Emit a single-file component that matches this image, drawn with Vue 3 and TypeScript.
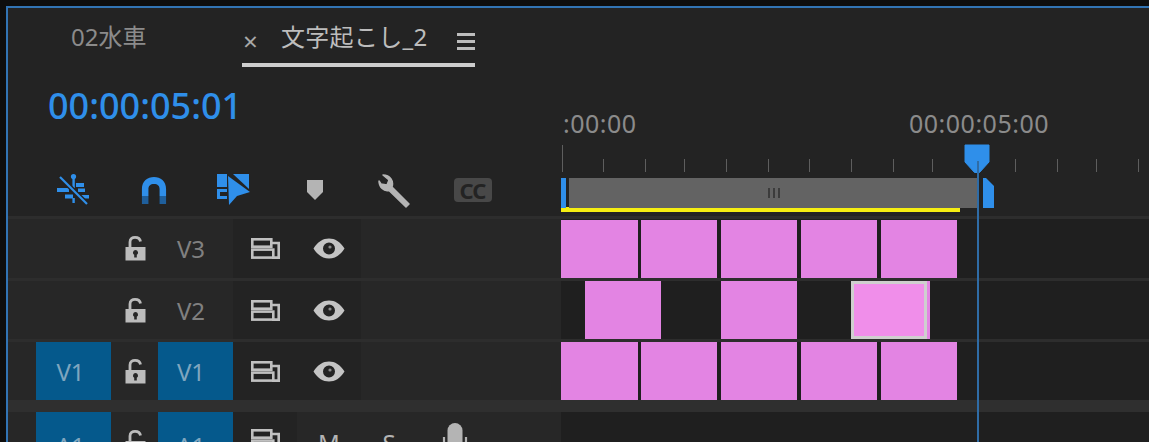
<script setup lang="ts">
interface Clip {
  start: number;
  end: number;
  selected?: boolean;
}

interface Track {
  name: string;
  patched: boolean;
  clips: Clip[];
}

// タイムライン上のクリップ位置(レーン左端からのpx)
const fullRow: Clip[] = [
  { start: 0, end: 77 },
  { start: 80, end: 156 },
  { start: 160, end: 236 },
  { start: 240, end: 316 },
  { start: 320, end: 396 }
];

const tracks: Track[] = [
  { name: "V3", patched: false, clips: fullRow },
  {
    name: "V2",
    patched: false,
    clips: [
      { start: 24, end: 100 },
      { start: 160, end: 236 },
      { start: 290, end: 366, selected: true },
      { start: 366, end: 369 }
    ]
  },
  { name: "V1", patched: true, clips: fullRow }
];

const ticks = [562, 603, 645, 684, 726, 768, 809, 851, 893, 932, 1015, 1057, 1096, 1138];

const clipStyle = (clips: Clip[], i: number) => ({
  width: `${clips[i].end - clips[i].start}px`,
  marginLeft: `${clips[i].start - (i > 0 ? clips[i - 1].end : 0)}px`
});
</script>

<template>
  <div class="panel">
    <div class="head">
      <div class="head-left">
        <div class="tabs">
          <div class="tab">02水車</div>
          <div class="tab tab-active">
            <span class="close">×</span>
            <span class="tab-name">文字起こし_2</span>
            <span class="burger"><i></i><i></i><i></i></span>
          </div>
        </div>
        <div class="timecode">00:00:05:01</div>
        <div class="tools">
          <svg width="34" height="34" viewBox="0 0 34 34">
            <g fill="#2f8fea">
              <circle cx="16.5" cy="3.5" r="2.6" />
              <rect x="15.4" y="3" width="2.4" height="12" />
              <rect x="19" y="10" width="8" height="4" />
              <rect x="0" y="15" width="12" height="4" />
              <rect x="21" y="15.5" width="7" height="3.5" />
              <rect x="8" y="21.5" width="8" height="4" />
              <rect x="24" y="22" width="8" height="3.5" />
              <rect x="15.4" y="25" width="2.4" height="5" />
            </g>
            <path d="M2 3 L30 31" stroke="#232323" stroke-width="5" />
            <path d="M3 4 L30 31" stroke="#2f8fea" stroke-width="2.2" />
          </svg>
          <svg width="26" height="30" viewBox="0 0 28 30" preserveAspectRatio="none">
            <path d="M1 21 V14 C1 6 7 2 14 2 C21 2 27 6 27 14 V21 H20 V14 C20 11 18 9 14 9 C10 9 8 11 8 14 V21 Z" fill="#2f8fea" />
            <path d="M1 21 H8 V29 H1 Z M20 21 H27 V29 H20 Z" fill="#1f5f9c" />
          </svg>
          <svg width="36" height="34" viewBox="0 0 36 34">
            <g fill="#2f8fea">
              <rect x="1" y="1" width="10" height="13" />
              <path d="M1 16 H11 V19 H4 V23 H11 V26 H1 Z" />
              <path d="M17 1 H33 V16 Z" />
              <path d="M12 3 L34 19 L21 23 L13 32 Z" />
            </g>
          </svg>
          <svg class="marker" width="18" height="22" viewBox="0 0 18 22">
            <path d="M1 1 H17 V13 L9 21 L1 13 Z" fill="#b4b4b4" />
          </svg>
          <svg class="wrench" width="34" height="36" viewBox="0 0 34 36">
            <path d="M31 32 L14 15 C16 9 12 3 5 3 L11 8 L9 13 L3 12 L1 9 C1 15 6 20 11 18.5 L28 35 Z" fill="#b4b4b4" stroke="#b4b4b4" stroke-linejoin="round" stroke-width="1.5" />
          </svg>
          <div class="cc">CC</div>
        </div>
      </div>
      <div class="head-right">
        <div class="ruler">
          <span class="ruler-label first">:00:00</span>
          <span class="ruler-label second">00:00:05:00</span>
          <i v-for="(x, i) in ticks" :key="x" class="tick" :class="{ major: i === 0 }" :style="{ left: `${x - 561}px` }"></i>
        </div>
        <div class="zoombar">
          <div class="handle-left"></div>
          <div class="zoom-thumb"><span class="grip"><i></i><i></i><i></i></span></div>
          <div class="handle-right"></div>
        </div>
        <div class="work-area"></div>
      </div>
    </div>

    <template v-for="t in tracks" :key="t.name">
      <div class="sep"></div>
      <div class="track">
        <div class="track-head">
          <div class="patch" :class="{ on: t.patched }">{{ t.patched ? "V1" : "" }}</div>
          <div class="cell lock">
            <svg width="21" height="25" viewBox="0 0 21 25">
              <path d="M5 12 V6 C5 2.5 7.5 1.4 10 1.4 C13 1.4 15 2.5 15.5 5.5" fill="none" stroke="#bcbcbc" stroke-width="2.8" />
              <path fill-rule="evenodd" d="M0.5 11 H20.5 V24.5 H0.5 Z M10.5 14 A2.6 2.6 0 0 0 9.2 18.8 V21.5 H11.8 V18.8 A2.6 2.6 0 0 0 10.5 14 Z" fill="#bcbcbc" />
            </svg>
          </div>
          <div class="target" :class="{ on: t.patched }">{{ t.name }}</div>
          <div class="cell dark">
            <svg width="29" height="21" viewBox="0 0 29 21">
              <g fill="none" stroke="#c0c0c0" stroke-width="2.6">
                <rect x="1.3" y="1.3" width="19" height="7.4" />
                <rect x="1.3" y="11.6" width="21" height="8" />
                <path d="M20 5 H27.7 V19.6 H21" />
              </g>
            </svg>
          </div>
          <div class="cell dark">
            <svg width="32" height="21" viewBox="0 0 32 21">
              <path fill-rule="evenodd" d="M0.5 10.5 C5 3.5 10 0.5 16 0.5 C22 0.5 27 3.5 31.5 10.5 C27 17.5 22 20.5 16 20.5 C10 20.5 5 17.5 0.5 10.5 Z M16 4.5 A6 6 0 1 0 16 16.5 A6 6 0 1 0 16 4.5 Z" fill="#c4c4c4" />
              <circle cx="17" cy="9" r="1.6" fill="#8a8a8a" />
            </svg>
          </div>
        </div>
        <div class="lane">
          <div
            v-for="(c, i) in t.clips"
            :key="c.start"
            class="clip"
            :class="{ selected: c.selected }"
            :style="clipStyle(t.clips, i)"
          ></div>
        </div>
      </div>
    </template>

    <div class="gutter"></div>

    <div class="track audio">
      <div class="track-head">
        <div class="patch on">A1</div>
        <div class="cell lock">
          <svg width="21" height="25" viewBox="0 0 21 25">
            <path d="M5 12 V6 C5 2.5 7.5 1.4 10 1.4 C13 1.4 15 2.5 15.5 5.5" fill="none" stroke="#bcbcbc" stroke-width="2.8" />
            <path fill-rule="evenodd" d="M0.5 11 H20.5 V24.5 H0.5 Z M10.5 14 A2.6 2.6 0 0 0 9.2 18.8 V21.5 H11.8 V18.8 A2.6 2.6 0 0 0 10.5 14 Z" fill="#bcbcbc" />
          </svg>
        </div>
        <div class="target on">A1</div>
        <div class="cell dark">
          <svg width="29" height="21" viewBox="0 0 29 21">
            <g fill="none" stroke="#c0c0c0" stroke-width="2.6">
              <rect x="1.3" y="1.3" width="19" height="7.4" />
              <rect x="1.3" y="11.6" width="21" height="8" />
              <path d="M20 5 H27.7 V19.6 H21" />
            </g>
          </svg>
        </div>
        <div class="cell letter">M</div>
        <div class="cell letter">S</div>
        <div class="cell mic">
          <svg width="26" height="30" viewBox="0 0 26 30">
            <rect x="5.5" y="0" width="15" height="26" rx="7.5" fill="#b4b4b4" />
            <path d="M2 14 V18 C2 24 7 28 13 28 C19 28 24 24 24 18 V14" fill="none" stroke="#b4b4b4" stroke-width="2.2" />
          </svg>
        </div>
      </div>
      <div class="lane"></div>
    </div>

    <div class="playhead">
      <svg width="26" height="30" viewBox="0 0 26 30">
        <path d="M1 1 H25 V18 L15.5 28.5 H10.5 L1 18 Z" fill="#2f8fea" stroke="#2f8fea" stroke-linejoin="round" />
      </svg>
      <i class="playhead-line"></i>
    </div>
  </div>
</template>

<style>
html,
body {
  margin: 0;
  background: #0e0e0e;
  overflow: hidden;
}
</style>

<style scoped>
.panel {
  position: relative;
  box-sizing: border-box;
  width: 1143px;
  height: 436px;
  margin: 6px 0 0 6px;
  border-top: 2px solid #3274b4;
  border-left: 2px solid #3274b4;
  background: #232323;
  overflow: hidden;
  font-family: "Noto Sans", "Noto Sans CJK JP", sans-serif;
}

.head {
  display: flex;
  height: 208px;
}

.head-left {
  width: 553px;
  flex: none;
}

.tabs {
  display: flex;
  height: 59px;
  padding-left: 63px;
  font-size: 24px;
  line-height: 58px;
  color: #8b8b8b;
}

.tab {
  width: 171px;
  height: 59px;
}

.tab-active {
  box-sizing: border-box;
  display: flex;
  align-items: center;
  width: 233px;
  height: 59px;
  border-bottom: 4px solid #cdcdcd;
  color: #bdbdbd;
}

.close {
  box-sizing: border-box;
  position: relative;
  top: 5px;
  width: 39px;
  padding-left: 1px;
  font-size: 26px;
  color: #a8a8a8;
}

.tab-name {
  position: relative;
  top: 1px;
  width: 176px;
  letter-spacing: 0.3px;
  white-space: nowrap;
}

.burger {
  display: flex;
  flex-direction: column;
  gap: 4px;
  width: 18px;
  margin-top: 11px;
}

.burger i {
  display: block;
  height: 3px;
  background: #bdbdbd;
}

.timecode {
  margin: 19px 0 0 40px;
  font-size: 36px;
  line-height: 40px;
  font-weight: 500;
  color: #2f8fea;
  white-space: nowrap;
}

.tools {
  display: grid;
  grid-template-columns: repeat(6, 80px);
  justify-items: center;
  align-items: center;
  height: 38px;
  margin: 45px 0 0 26px;
}

.marker {
  margin-left: 1px;
}

.wrench {
  margin-left: 2px;
}

.cc {
  width: 38px;
  height: 24px;
  margin-left: -3px;
  border-radius: 4px;
  background: #484848;
  color: #232323;
  font-size: 22px;
  font-weight: 700;
  line-height: 24px;
  letter-spacing: -1px;
  text-align: center;
}

.head-right {
  flex: 1;
  padding-top: 92px;
}

.ruler {
  position: relative;
  height: 78px;
}

.ruler-label {
  position: absolute;
  top: 8px;
  font-size: 25px;
  line-height: 30px;
  letter-spacing: 0.5px;
  color: #8b8b8b;
  white-space: nowrap;
}

.first {
  left: 2px;
}

.second {
  left: 348px;
}

.tick {
  position: absolute;
  top: 59px;
  width: 1px;
  height: 13px;
  background: #5e5e5e;
}

.major {
  top: 45px;
  height: 27px;
}

.zoombar {
  display: flex;
  height: 30px;
}

.handle-left {
  width: 5px;
  background: #2f8fea;
}

.zoom-thumb {
  display: flex;
  align-items: center;
  justify-content: center;
  width: 410px;
  margin-left: 3px;
  background: #636363;
}

.grip {
  display: flex;
  gap: 3px;
}

.grip i {
  display: block;
  width: 2px;
  height: 10px;
  background: #3c3c3c;
}

.handle-right {
  width: 11px;
  margin-left: 4px;
  background: #2f8fea;
  clip-path: polygon(0 0, 3px 0, 100% 8px, 100% 100%, 0 100%);
}

.work-area {
  width: 399px;
  height: 5px;
  margin-top: -1px;
  background: #f5ee12;
}

.sep {
  height: 3px;
  background: #2d2d2d;
}

.track {
  display: flex;
  height: 58px;
}

.track:nth-of-type(3) {
  height: 59px;
}

.track:nth-of-type(3) .lane {
  padding-top: 1px;
}

.track-head {
  display: grid;
  grid-template-columns: 28px 75px 47px 75px 64px 64px 1fr;
  width: 553px;
  flex: none;
  background: #272727;
  color: #808080;
}

.patch {
  grid-column: 2;
}

.patch.on,
.target.on {
  background: #05598c;
  color: #7fa6bf;
}

.patch,
.target {
  box-sizing: border-box;
  display: flex;
  align-items: center;
  justify-content: center;
  padding-right: 9px;
  font-size: 24px;
}

.patch.on {
  padding-right: 6px;
}

.cell {
  display: flex;
  align-items: center;
  justify-content: center;
}

.lock {
  padding-left: 2px;
}

.dark {
  background: #232323;
}

.lane {
  display: flex;
  flex: 1;
  background: #1f1f1f;
}

.clip {
  box-sizing: border-box;
  background: #e384e3;
}

.clip.selected {
  border: 3px solid #cfcfcf;
  background: #f08eea;
}

.gutter {
  height: 12px;
  background: #2f2f2f;
}

.audio {
  height: 60px;
}

.audio .track-head {
  grid-template-columns: 28px 75px 47px 75px 64px 64px 56px 76px 1fr;
  align-items: stretch;
}

.audio .patch,
.audio .target {
  align-items: flex-start;
  padding-top: 17px;
  line-height: 33px;
}

.audio .cell {
  align-items: flex-start;
  padding-top: 17px;
}

.audio .cell.lock {
  padding-top: 18px;
}

.audio .cell.letter {
  padding-top: 14px;
  font-size: 24px;
  line-height: 33px;
  color: #b4b4b4;
}

.audio .cell.mic {
  padding-top: 11px;
}

.playhead {
  position: absolute;
  left: 956px;
  top: 136px;
  bottom: 0;
  display: flex;
  flex-direction: column;
  align-items: center;
  width: 26px;
}

.playhead-line {
  flex: 1;
  width: 2px;
  margin: -13px 0 0 2px;
  background: #2f6ca6;
}
</style>
